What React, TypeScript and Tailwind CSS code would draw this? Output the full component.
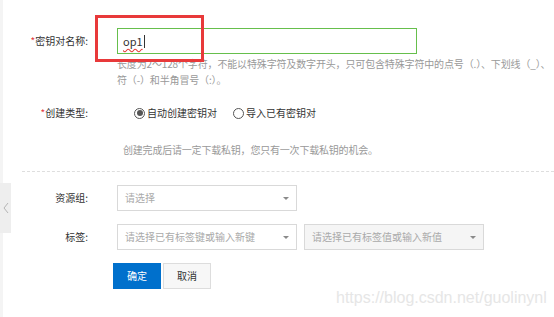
import React from 'react';

const font = { fontFamily: '"Noto Sans CJK SC", "Noto Sans", sans-serif' };

function Caret() {
  return (
    <span className="ml-auto mr-[7px] h-0 w-0 border-x-[3px] border-t-[3px] border-x-transparent border-t-[#8a8a8a]" />
  );
}

function Radio({ checked, label }: { checked?: boolean; label: string }) {
  return (
    <label className="flex items-center gap-[2px]">
      <span className="flex h-[11px] w-[11px] items-center justify-center rounded-full border border-[#555] bg-white">
        {checked && <span className="h-[6px] w-[6px] rounded-full bg-[#555]" />}
      </span>
      <span className="text-[#333]">{label}</span>
    </label>
  );
}

function Label({ text, required }: { text: string; required?: boolean }) {
  return (
    <div className="w-[88px] shrink-0 text-right text-[#333]">
      {required && <span className="text-[#e4393c]">*</span>}
      {text}
    </div>
  );
}

function Select({ placeholder, width, muted }: { placeholder: string; width: string; muted?: boolean }) {
  return (
    <div
      className={`flex h-[26px] items-center border border-[#d9d9d9] pl-[7px] text-[#aaa] ${width} ${
        muted ? 'bg-[#f5f5f5]' : 'bg-white'
      }`}
    >
      <span>{placeholder}</span>
      <Caret />
    </div>
  );
}

export default function App() {
  return (
    <div className="relative h-[317px] w-[554px] overflow-hidden bg-white text-[10px] leading-[16px]" style={font}>
      <div className="absolute left-0 top-0 h-full w-[3px] bg-[#f4f4f4]" />
      <div className="absolute left-0 top-[183px] flex h-[50px] w-[11px] items-center justify-center bg-[#eeeeee]">
        <svg width="6" height="12" viewBox="0 0 6 12" fill="none">
          <path d="M5 1 L1 6 L5 11" stroke="#b5b5b5" strokeWidth="1" />
        </svg>
      </div>

      <div className="flex flex-col pt-[28px]">
        <div className="flex items-center">
          <Label text="密钥对名称:" required />
          <div className="ml-[29px] flex h-[26px] w-[300px] items-center border border-[#66bf4c] px-[5px] text-[11px] text-[#333]">
            <span className="underline decoration-[#e53935] decoration-wavy underline-offset-2">op1</span>
            <span className="ml-[1px] h-[13px] w-px bg-[#333]" />
          </div>
        </div>

        <div className="ml-[117px] mt-[2px] whitespace-nowrap tracking-[-0.15px] text-[#999]">
          <div>长度为2～128个字符，不能以特殊字符及数字开头，只可包含特殊字符中的点号（.）、下划线（_）、</div>
          <div>符（-）和半角冒号（:）。</div>
        </div>

        <div className="mt-[17px] flex items-center">
          <Label text="创建类型:" required />
          <div className="ml-[46px] flex items-center gap-[16px]">
            <Radio checked label="自动创建密钥对" />
            <Radio label="导入已有密钥对" />
          </div>
        </div>

        <div className="ml-[123px] mt-[21px] tracking-[-0.2px] text-[#999]">创建完成后请一定下载私钥，您只有一次下载私钥的机会。</div>

        <div className="ml-[22px] mt-[13px] border-t border-dashed border-[#dedede]" />

        <div className="mt-[13px] flex items-center">
          <Label text="资源组:" />
          <div className="ml-[29px]">
            <Select placeholder="请选择" width="w-[180px]" />
          </div>
        </div>

        <div className="mt-[13px] flex items-center">
          <Label text="标签:" />
          <div className="ml-[29px] flex gap-[7px]">
            <Select placeholder="请选择已有标签键或输入新键" width="w-[180px]" />
            <Select placeholder="请选择已有标签值或输入新值" width="w-[180px]" muted />
          </div>
        </div>

        <div className="ml-[113px] mt-[13px] flex gap-[2px]">
          <button className="h-[26px] w-[48px] bg-[#0070cc] text-white">确定</button>
          <button className="h-[26px] w-[48px] border border-[#dddddd] bg-[#f7f7f7] text-[#333]">取消</button>
        </div>
      </div>

      <div className="absolute left-[95px] top-[15px] h-[47px] w-[109px] border-[3px] border-[#e8393a]" />
      <div
        className="absolute left-[336px] top-[288px] text-[16px] leading-[20px] text-[#e6e6e6]"
        style={{ fontFamily: '"Liberation Sans", Arial, sans-serif' }}
      >
        https://blog.csdn.net/guolinynl
      </div>
    </div>
  );
}
